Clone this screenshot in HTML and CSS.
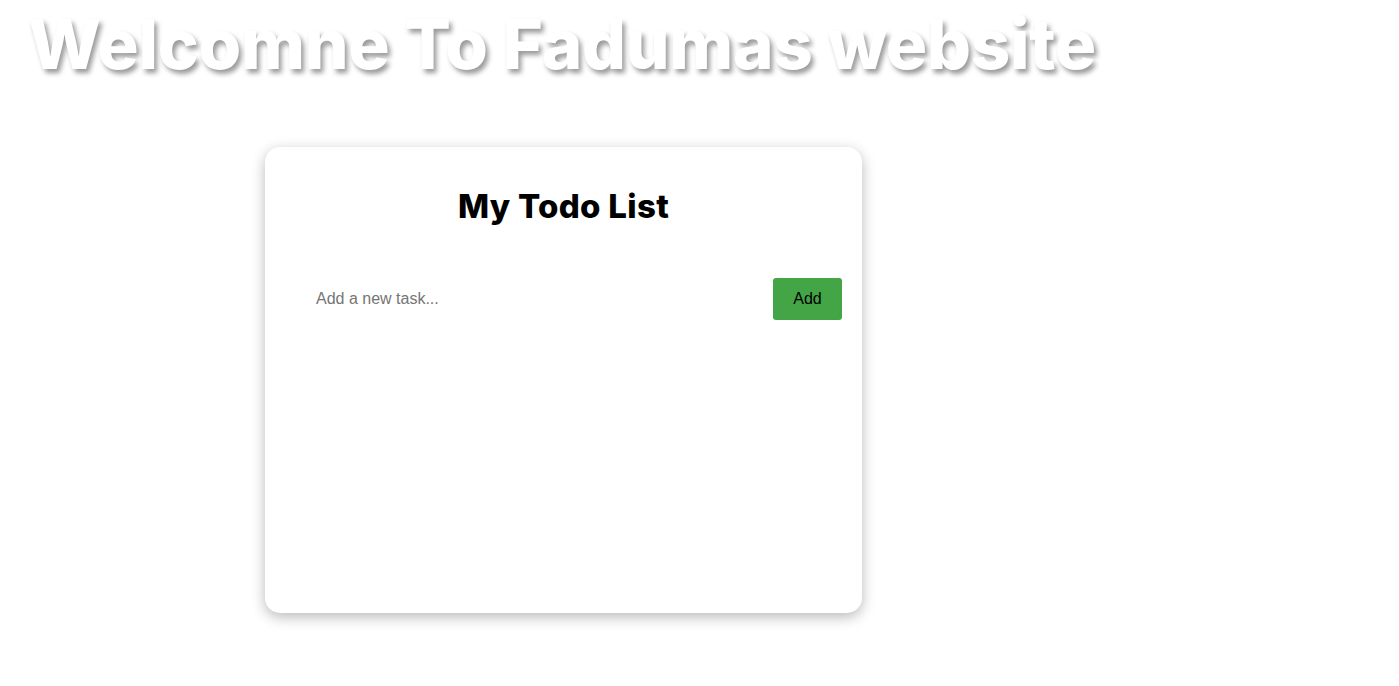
FILE: index.html
```html
<!DOCTYPE html>
<html lang="en">
<head>
<meta charset="utf-8">
<title>Todo</title>
<link rel="stylesheet" href="styles.css">
</head>
<body>
<h1 class="welcome">Welcomne To Fadumas website</h1>
<main class="card">
  <h2 class="card-title">My Todo List</h2>
  <div class="input-row">
    <input class="task-input" type="text" placeholder="Add a new task...">
    <button class="add-btn">Add</button>
  </div>
  <ul class="task-list"></ul>
</main>
</body>
</html>
```
FILE: styles.css
```css
html, body {
  margin: 0;
  padding: 0;
  background: #ffffff;
}
body {
  font-family: "Liberation Sans", Arial, sans-serif;
  padding-bottom: 40px;
}
.welcome {
  margin: 0;
  padding: 4px 0 4px 28px;
  font-family: Inter, "Open Sans", sans-serif;
  font-weight: 800;
  font-size: 69px;
  letter-spacing: -0.28px;
  line-height: 80px;
  color: #ffffff;
  text-shadow: 3px 4px 5px rgba(0, 0, 0, 0.4);
  white-space: nowrap;
}
.card {
  box-sizing: border-box;
  width: 597px;
  height: 466px;
  margin: 59px 0 0 265px;
  background: #ffffff;
  border-radius: 15px;
  box-shadow: 0 4px 14px rgba(0, 0, 0, 0.28);
  padding: 39px 20px 20px 40px;
}
.card-title {
  margin: 0 0 0 -20px;
  text-align: center;
  font-family: Inter, "Open Sans", sans-serif;
  font-weight: 800;
  font-size: 33px;
  letter-spacing: 0.3px;
  line-height: 40px;
}
.input-row {
  display: flex;
  align-items: center;
  margin-top: 52px;
}
.task-input {
  flex: 1;
  border: none;
  outline: none;
  height: 40px;
  padding: 0 11px;
  font-family: "Liberation Sans", Arial, sans-serif;
  font-size: 16px;
  color: #333;
  background: transparent;
}
.task-input::placeholder {
  color: #757575;
}
.add-btn {
  width: 69px;
  height: 42px;
  margin-left: 8px;
  border: none;
  border-radius: 3px;
  background: #43a546;
  color: #000;
  font-family: "Liberation Sans", Arial, sans-serif;
  font-size: 16px;
}
.task-list {
  margin: 0;
  padding: 0;
  list-style: none;
}
```
